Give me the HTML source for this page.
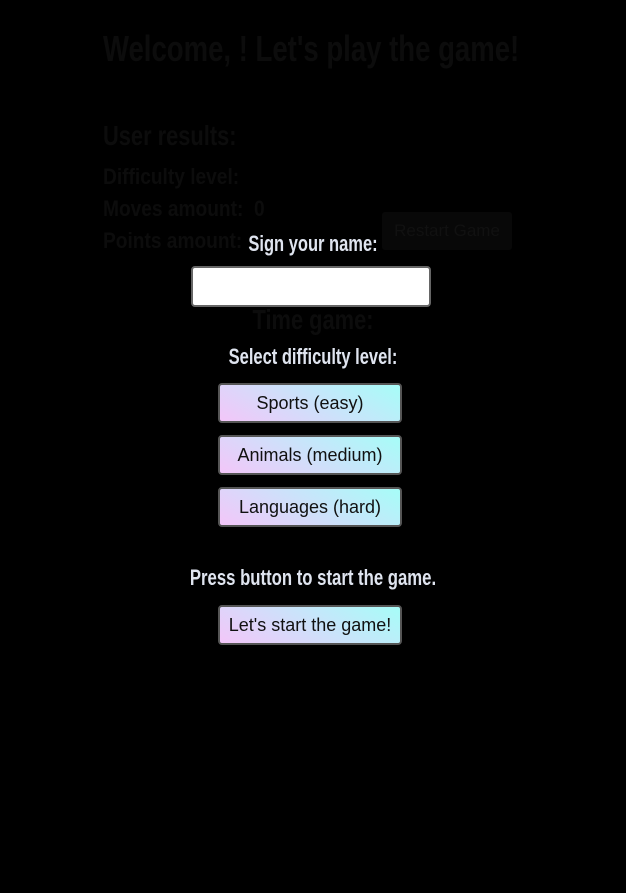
<!DOCTYPE html>
<html><head><style>
html,body{margin:0;width:626px;height:893px;background:#000;overflow:hidden;position:relative}
.c{position:absolute;font-family:"Liberation Sans Narrow","Liberation Sans",sans-serif;font-weight:bold;white-space:nowrap;transform:scaleX(0.75);}
.l{transform-origin:left center}
.m{left:0;width:626px;text-align:center;transform-origin:center}
.d{color:#0c0c0c}
.w{color:#dfe4ef}
.btn{position:absolute;left:218px;width:184px;height:40px;box-sizing:border-box;border:2px solid #555;border-radius:4px;background:linear-gradient(30deg,#f3c6f9 0%,#c9e4fa 55%,#a6fdf8 100%);font-family:"Liberation Sans",sans-serif;font-size:18px;color:#111;text-align:center;line-height:36px}
</style></head><body>
<div class="c l d" style="left:103px;top:28px;font-size:36px;transform:scaleX(0.765)">Welcome, ! Let's play the game!</div>
<div class="c l d" style="left:103px;top:120px;font-size:28px;transform:scaleX(0.78)">User results:</div>
<div class="c l d" style="left:103px;top:164px;font-size:22px;transform:scaleX(0.87)">Difficulty level:</div>
<div class="c l d" style="left:103px;top:196px;font-size:22px;transform:scaleX(0.87)">Moves amount: &nbsp;0</div>
<div class="c l d" style="left:103px;top:228px;font-size:22px;transform:scaleX(0.87)">Points amount:</div>
<div style="position:absolute;left:382px;top:212px;width:130px;height:38px;background:#080808;border-radius:3px;font-family:'Liberation Sans',sans-serif;font-size:17px;color:#111;text-align:center;line-height:38px">Restart Game</div>
<div class="c m d" style="top:304px;font-size:28px;transform:scaleX(0.78)">Time game:</div>
<div class="c m w" style="top:231px;font-size:22px">Sign your name:</div>
<div style="position:absolute;left:191px;top:266px;width:240px;height:41px;box-sizing:border-box;background:#fff;border:2px solid #666;border-radius:4px"></div>
<div class="c m w" style="top:344px;font-size:22px">Select difficulty level:</div>
<div class="btn" style="top:383px">Sports (easy)</div>
<div class="btn" style="top:435px">Animals (medium)</div>
<div class="btn" style="top:487px">Languages (hard)</div>
<div class="c m w" style="top:565px;font-size:22px;transform:scaleX(0.76)">Press button to start the game.</div>
<div class="btn" style="top:605px">Let's start the game!</div>
</body></html>
